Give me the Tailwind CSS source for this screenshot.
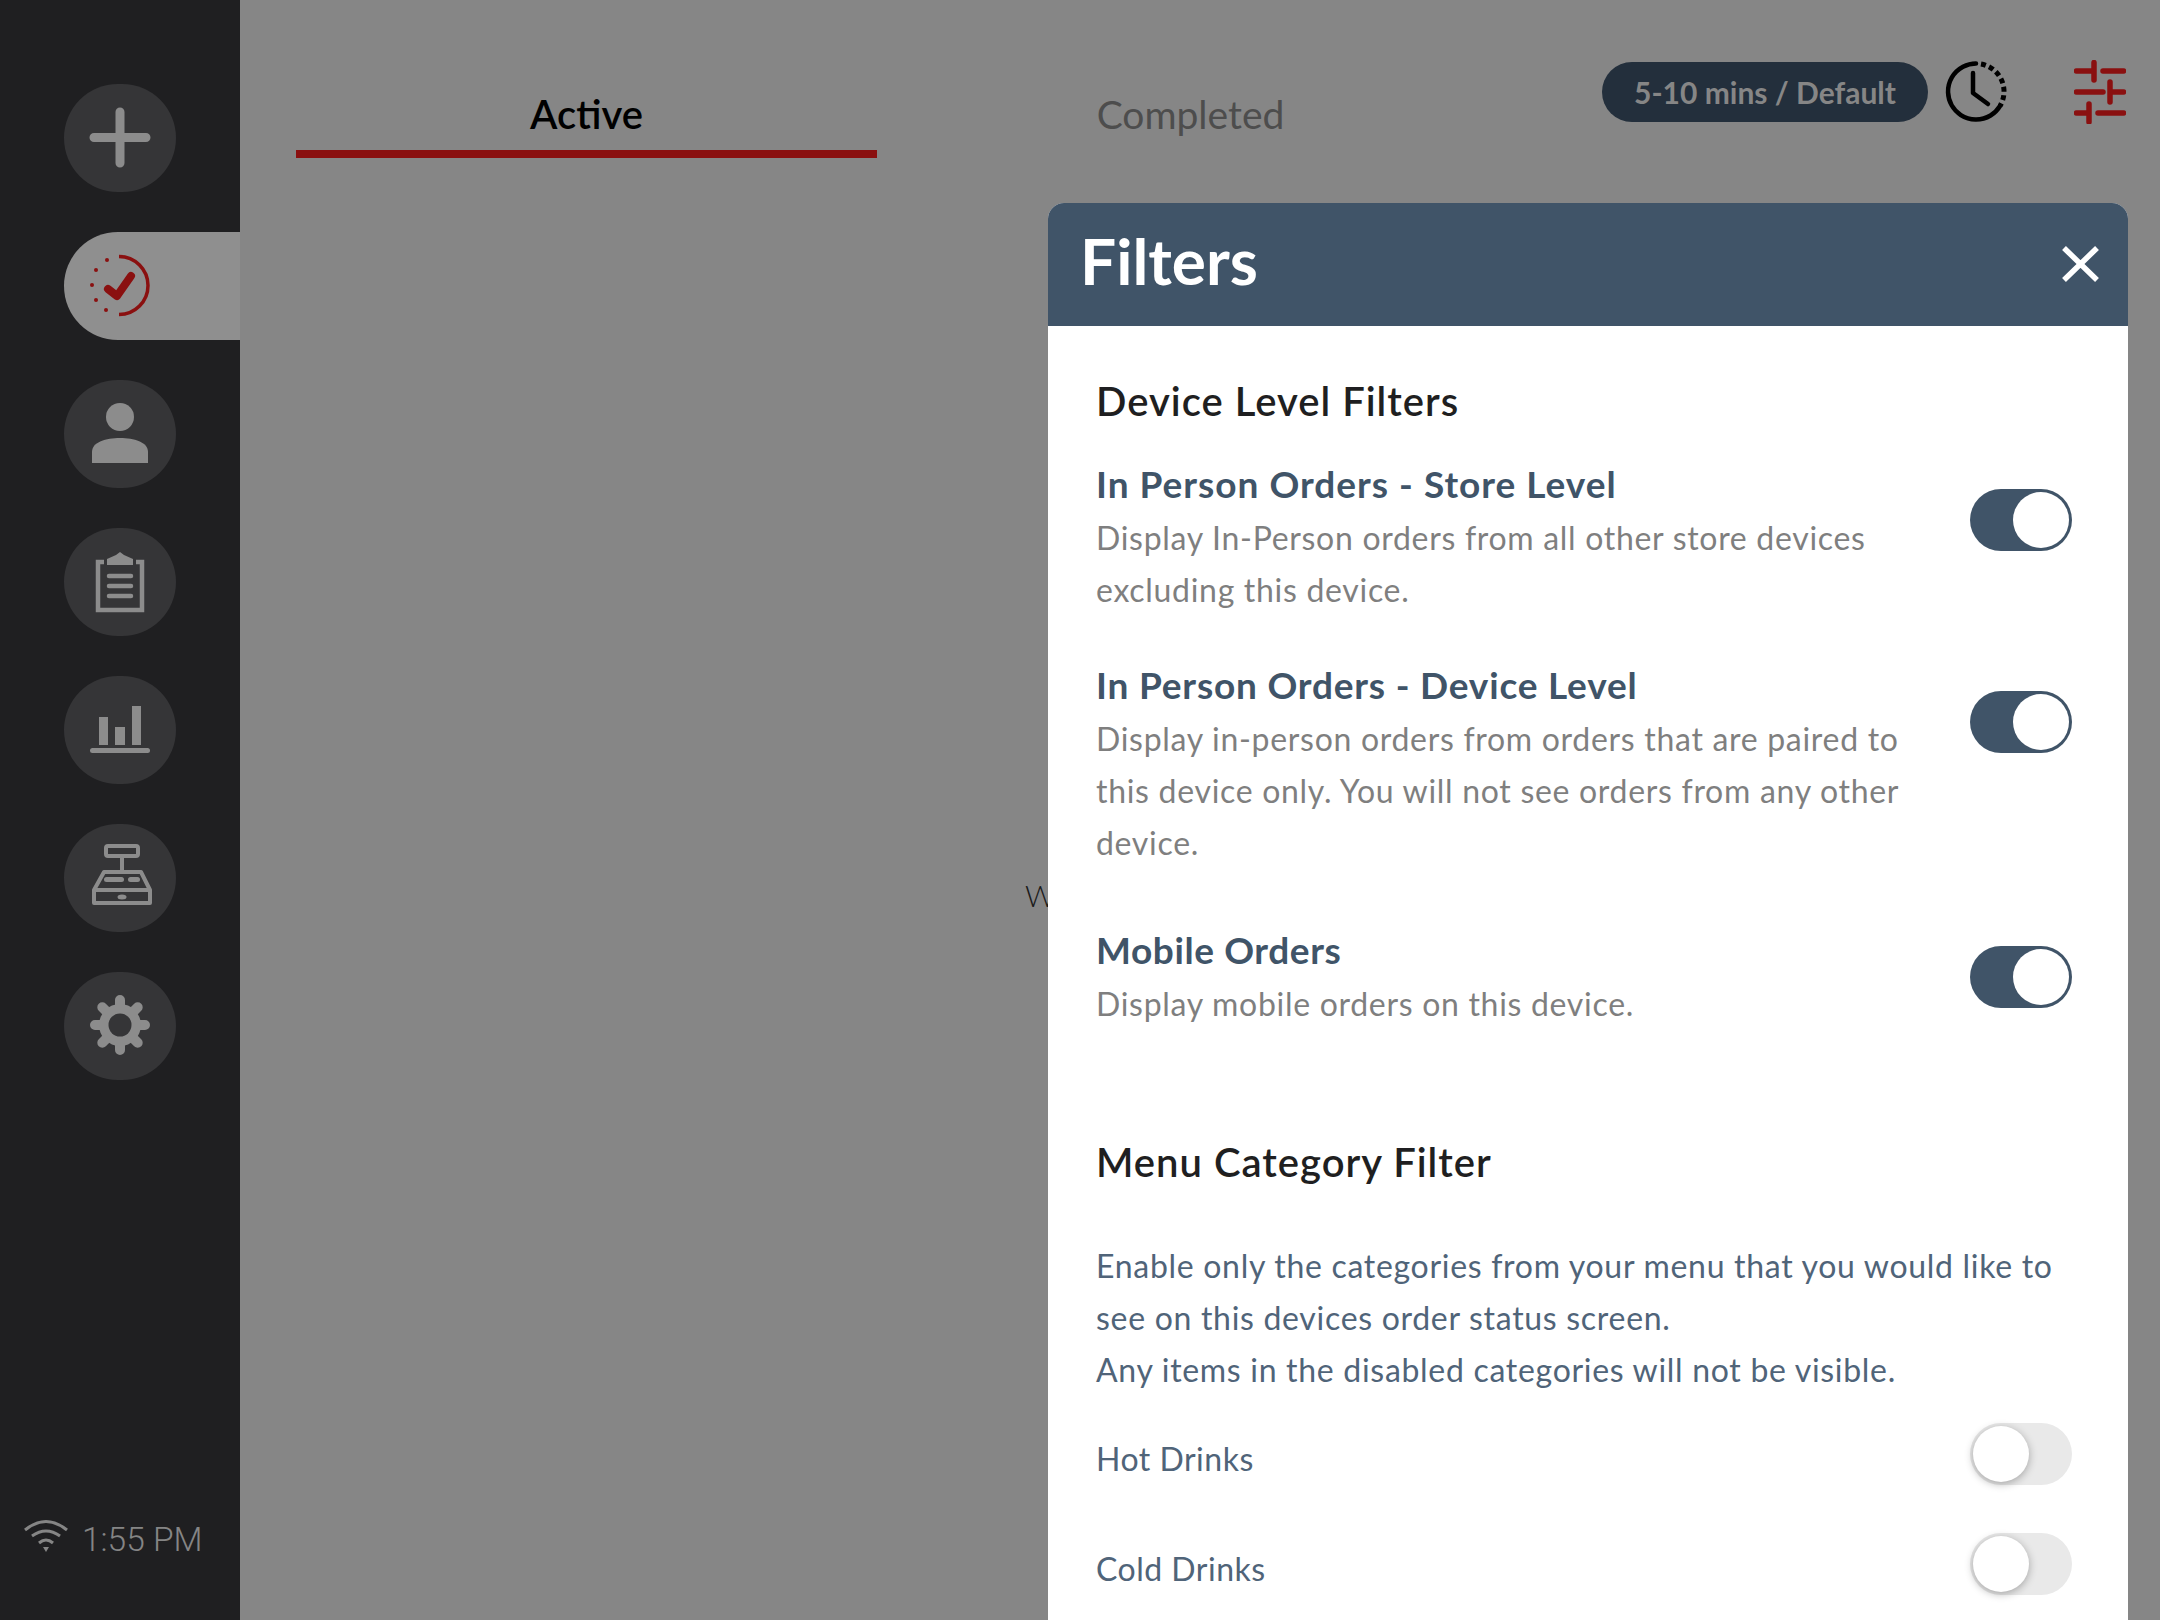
<!DOCTYPE html>
<html lang="en">
<head>
    <meta charset="UTF-8">
    <meta name="viewport" content="width=device-width, initial-scale=1.0">
    <script src="https://cdn.jsdelivr.net/npm/@tailwindcss/browser@4"></script>
    <title>Orders</title>
</head>
<body class="relative flex h-[1620px] w-[2160px] overflow-hidden bg-[#868686] font-['Lato','Liberation_Sans',sans-serif]">

    <!-- Sidebar -->
    <aside class="flex h-full w-[240px] shrink-0 flex-col gap-[40px] bg-[#1f1f21] pt-[84px]">
        <div class="ml-[64px] h-[108px] w-[112px] rounded-full bg-[#353537]">
            <svg viewBox="0 0 112 108" class="h-[108px] w-[112px]" fill="none" stroke="#8c8c8c" stroke-width="9" stroke-linecap="round"><path d="M56 28V79M30 53.500H82"/></svg>
        </div>
        <div class="ml-[64px] h-[108px] w-[176px] rounded-l-full bg-[#8f8f8f]">
            <svg viewBox="0 0 112 108" class="h-[108px] w-[112px]" fill="none" stroke="#8a1010">
                <path d="M55 24.500A29 29 0 0 1 55 82.500" stroke-width="3.500"/>
                <g fill="#8a1010" stroke="none"><circle cx="43" cy="28" r="2"/><circle cx="32" cy="38" r="2"/><circle cx="28" cy="53" r="2"/><circle cx="32" cy="68" r="2"/><circle cx="42" cy="78" r="2"/></g>
                <path d="M44 57L53 64L67 44" stroke-width="8" stroke-linecap="round" stroke-linejoin="round"/>
            </svg>
        </div>
        <div class="ml-[64px] h-[108px] w-[112px] rounded-full bg-[#353537]">
            <svg viewBox="0 0 112 108" class="h-[108px] w-[112px]" fill="#8c8c8c"><circle cx="56" cy="37" r="14"/><path d="M28 83V72C28 62 42 58 56 58C70 58 84 62 84 72V83Z"/></svg>
        </div>
        <div class="ml-[64px] h-[108px] w-[112px] rounded-full bg-[#353537]">
            <svg viewBox="0 0 112 108" class="h-[108px] w-[112px]" fill="none" stroke="#8c8c8c">
                <path d="M40 34H34V82H78V34H72" stroke-width="4.500"/>
                <path d="M43 37V31L52 27L56 24L60 27L69 31V37Z" fill="#8c8c8c" stroke="none"/>
                <path d="M45 48H67M45 58H67M45 68H67" stroke-width="4.500" stroke-linecap="round"/>
            </svg>
        </div>
        <div class="ml-[64px] h-[108px] w-[112px] rounded-full bg-[#353537]">
            <svg viewBox="0 0 112 108" class="h-[108px] w-[112px]" fill="#8c8c8c"><rect x="35" y="41" width="9" height="28"/><rect x="51" y="51" width="10" height="18"/><rect x="68" y="30" width="9" height="39"/><rect x="26" y="72" width="60" height="5" rx="2.500"/></svg>
        </div>
        <div class="ml-[64px] h-[108px] w-[112px] rounded-full bg-[#353537]">
            <svg viewBox="0 0 112 108" class="h-[108px] w-[112px]" fill="none" stroke="#8c8c8c" stroke-width="4" stroke-linejoin="round">
                <rect x="42" y="22" width="32" height="10" rx="2"/>
                <path d="M58 32V47"/>
                <path d="M40 48H77L86 66V79H30V66ZM30 66H86"/>
                <g fill="#8c8c8c" stroke="none"><rect x="40" y="53" width="20" height="5" rx="2.500"/><rect x="64" y="53" width="12" height="5" rx="2.500"/><ellipse cx="58" cy="73" rx="4.500" ry="2.500"/></g>
            </svg>
        </div>
        <div class="ml-[64px] h-[108px] w-[112px] rounded-full bg-[#353537]">
            <svg viewBox="0 0 112 108" class="h-[108px] w-[112px]" stroke="#8c8c8c" stroke-width="10" stroke-linecap="round">
                <path d="M56 28V78M31 53H81M38.300 35.300L73.700 70.700M73.700 35.300L38.300 70.700"/>
                <circle cx="56" cy="53" r="21" fill="#8c8c8c" stroke="none"/>
                <circle cx="56" cy="53" r="11.500" fill="#353537" stroke="none"/>
            </svg>
        </div>
        <div class="mt-auto mb-[60px] flex items-start pl-[22px]">
            <svg viewBox="0 0 48 36" class="mt-[1px] h-[36px] w-[48px]" fill="none" stroke="#858585" stroke-width="3"><path d="M3 11Q24 -6 45 11M10 17Q24 7 38 17M17 24Q24 18 31 24"/><path d="M21 28H27L24 33Z" fill="#858585" stroke="none"/></svg>
            <span class="ml-[12px] mt-[2px] text-[33.500px] font-light leading-[40px] text-[#858585] font-['Roboto',sans-serif]">1:55 PM</span>
        </div>
    </aside>

    <!-- Main -->
    <main class="relative flex-1">
        <div class="flex items-start pl-[56px]">
            <div class="h-[158px] w-[581px] border-b-[8px] border-[#8a1010] pt-[92px] text-center text-[40px] font-semibold leading-[44px] text-black">Active</div>
            <div class="ml-[23px] h-[158px] w-[581px] pt-[92px] text-center text-[39px] leading-[44px] text-[#4d4d4d]">Completed</div>
            <div class="ml-[121px] flex items-center pt-[60px]">
                <div class="flex h-[60px] w-[326px] items-center justify-center rounded-full bg-[#232f3c] text-[30px] font-bold text-[#868686]">5-10 mins / Default</div>
                <svg viewBox="0 0 62 64" class="ml-[17px] h-[64px] w-[62px]" fill="none" stroke="#000" stroke-width="4.500" stroke-linecap="round" stroke-linejoin="round">
                    <path d="M31 3.500A28 28 0 1 0 55 46"/>
                    <path d="M36 4A28 28 0 0 1 55 46" stroke-linecap="butt" stroke-width="5" stroke-dasharray="5 3.500"/>
                    <path d="M28 13V33L43 44"/>
                </svg>
                <svg viewBox="0 0 52 64" class="ml-[67px] h-[64px] w-[52px]" fill="none" stroke="#8a1010" stroke-width="5.500" stroke-linecap="round">
                    <path d="M2.500 11H20M20 2.500V20M29 11H49.500M2.500 32H29M36 22V42M36 32H49.500M2.500 53H15M15 44V62M24 53H49.500"/>
                </svg>
            </div>
        </div>
        <span class="absolute left-[785px] top-[875px] text-[30px] font-light leading-[40px] text-[#1a1a1a]">W</span>
    </main>

    <!-- Filters modal -->
    <section class="absolute left-[1048px] top-[203px] h-[1417px] w-[1080px] overflow-hidden rounded-t-[16px] bg-white">
        <header class="flex h-[123px] items-center justify-between bg-[#405468] pl-[32px] pr-[29px]">
            <h2 class="mb-[8px] text-[64px] font-bold leading-[70px] text-white">Filters</h2>
            <svg viewBox="0 0 37 36" class="h-[36px] w-[37px] -translate-y-[1px]" fill="none" stroke="#fff" stroke-width="5.500"><path d="M2 2L35 34M35 2L2 34"/></svg>
        </header>
        <div class="pl-[48px] pr-[56px] pt-[49px]">
            <h3 class="mb-[31px] text-[40px] font-semibold leading-[52px] tracking-[1px] text-[#1f1f21]">Device Level Filters</h3>

            <div class="mb-[43px] flex items-start justify-between">
                <div class="w-[820px]">
                    <h4 class="text-[37px] font-bold leading-[52px] tracking-[1px] text-[#405468]">In Person Orders - Store Level</h4>
                    <p class="mt-[2px] text-[32px] leading-[52px] tracking-[0.7px] text-[#7f7f7f]">Display In-Person orders from all other store devices<br>excluding this device.</p>
                </div>
                <div class="relative mt-[31px] h-[62px] w-[102px] rounded-full bg-[#405468]"><span class="absolute right-[3px] top-[3px] size-[56px] rounded-full bg-white"></span></div>
            </div>

            <div class="mb-[55px] flex items-start justify-between">
                <div class="w-[820px]">
                    <h4 class="text-[37px] font-bold leading-[52px] tracking-[0.8px] text-[#405468]">In Person Orders - Device Level</h4>
                    <p class="mt-[2px] text-[32px] leading-[52px] tracking-[0.7px] text-[#7f7f7f]">Display in-person orders from orders that are paired to<br>this device only. You will not see orders from any other<br>device.</p>
                </div>
                <div class="relative mt-[32px] h-[62px] w-[102px] rounded-full bg-[#405468]"><span class="absolute right-[3px] top-[3px] size-[56px] rounded-full bg-white"></span></div>
            </div>

            <div class="mb-[106px] flex items-start justify-between">
                <div class="w-[820px]">
                    <h4 class="text-[37px] font-bold leading-[52px] tracking-[0.6px] text-[#405468]">Mobile Orders</h4>
                    <p class="mt-[2px] text-[32px] leading-[52px] tracking-[0.7px] text-[#7f7f7f]">Display mobile orders on this device.</p>
                </div>
                <div class="relative mt-[22px] h-[62px] w-[102px] rounded-full bg-[#405468]"><span class="absolute right-[3px] top-[3px] size-[56px] rounded-full bg-white"></span></div>
            </div>

            <h3 class="mb-[52px] text-[40px] font-semibold leading-[52px] tracking-[1px] text-[#1f1f21]">Menu Category Filter</h3>
            <p class="mb-[27px] text-[32px] leading-[52px] tracking-[0.7px] text-[#506479]">Enable only the categories from your menu that you would like to<br>see on this devices order status screen.<br>Any items in the disabled categories will not be visible.</p>

            <div class="mb-[48px] flex items-center justify-between">
                <span class="pt-[10px] text-[32px] leading-[52px] tracking-[0.5px] text-[#506479]">Hot Drinks</span>
                <div class="relative h-[62px] w-[102px] rounded-full bg-[#e9e9e9]"><span class="absolute left-[3px] top-[3px] size-[56px] rounded-full bg-white shadow-[0_2px_8px_rgba(0,0,0,0.3)]"></span></div>
            </div>
            <div class="flex items-center justify-between">
                <span class="pt-[10px] text-[32px] leading-[52px] tracking-[0.5px] text-[#506479]">Cold Drinks</span>
                <div class="relative h-[62px] w-[102px] rounded-full bg-[#e9e9e9]"><span class="absolute left-[3px] top-[3px] size-[56px] rounded-full bg-white shadow-[0_2px_8px_rgba(0,0,0,0.3)]"></span></div>
            </div>
        </div>
    </section>
</body>
</html>
